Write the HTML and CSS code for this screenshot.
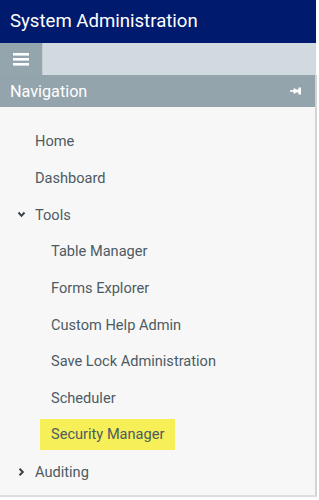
FILE: index.html
```html
<!DOCTYPE html>
<html>
<head>
  <title>System Administration</title>
  <link rel="stylesheet" href="styles.css">
</head>
<body>
  <div id="header">System Administration</div>
  <div class="toolbar">
    <button class="menu-button" aria-label="Menu">
      <svg width="16" height="13" viewBox="0 0 16 13">
        <rect x="0" y="0" width="16" height="2.6" fill="#fff"/>
        <rect x="0" y="5" width="16" height="2.6" fill="#fff"/>
        <rect x="0" y="10" width="16" height="2.6" fill="#fff"/>
      </svg>
    </button>
    <div class="toolbar-fill"></div>
  </div>
  <div class="nav">
    <div class="nav-title">
      <span>Navigation</span>
      <svg class="pin" width="11" height="8" viewBox="0 0 11 8">
        <rect x="0" y="3.2" width="4" height="1.6" fill="#fff"/>
        <rect x="3.5" y="1.5" width="2" height="5" fill="#fff"/>
        <rect x="5" y="2.5" width="4" height="3" fill="#fff"/>
        <rect x="8.5" y="0.5" width="2.5" height="7" fill="#fff"/>
      </svg>
    </div>
    <ul class="nav-list">
      <li class="item">Home</li>
      <li class="item">Dashboard</li>
      <li class="item group">
        <svg class="chev" width="19" height="8" viewBox="0 0 19 8">
          <path d="M2.5 1.5 L5.5 4.8 L8.5 1.5" fill="none" stroke="#36434a" stroke-width="2"/>
        </svg>Tools
      </li>
      <li class="item sub">Table Manager</li>
      <li class="item sub">Forms Explorer</li>
      <li class="item sub">Custom Help Admin</li>
      <li class="item sub">Save Lock Administration</li>
      <li class="item sub">Scheduler</li>
      <li class="item sub"><span class="highlight">Security Manager</span></li>
      <li class="item group">
        <svg class="chev" width="19" height="10" viewBox="0 0 19 10">
          <path d="M3.5 1.8 L6.8 5 L3.5 8.2" fill="none" stroke="#36434a" stroke-width="2"/>
        </svg>Auditing
      </li>
    </ul>
  </div>
</body>
</html>
```

FILE: styles.css
```css
body {
  margin: 0;
  width: 319px;
  font-family: Roboto, 'Liberation Sans', sans-serif;
  background-color: #ffffff;
}
#header {
  height: 43px;
  width: 316px;
  box-sizing: border-box;
  padding-left: 10px;
  background-color: #001a6e;
  color: #ffffff;
  font-size: 18.6px;
  line-height: 43px;
}
.toolbar {
  display: flex;
  width: 316px;
  height: 32px;
}
.menu-button {
  width: 42px;
  height: 32px;
  border: none;
  padding: 0;
  background-color: #94a5ad;
  display: flex;
  align-items: center;
  justify-content: center;
}
.toolbar-fill {
  flex: 1;
  background-color: #d1dadf;
  border-left: 1px solid #c2ccd1;
}
.nav {
  width: 315px;
  border-right: 2px solid #d4d4d4;
  border-bottom: 2px solid #dedede;
  background-color: #f7f7f7;
}
.nav-title {
  display: flex;
  align-items: center;
  justify-content: space-between;
  height: 32px;
  padding: 0 14px 0 10px;
  background-color: #93a4ac;
  color: #ffffff;
  font-size: 16.2px;
}
.nav-list {
  list-style: none;
  margin: 0;
  padding: 16px 0 5px 0;
}
.item {
  display: flex;
  align-items: center;
  height: 36.7px;
  padding-left: 35px;
  font-size: 14.6px;
  color: #4d5b63;
}
.item.sub {
  padding-left: 51px;
}
.item.group {
  padding-left: 16px;
}
.chev {
  flex: none;
}
.highlight {
  margin-left: -11px;
  padding: 0 11px;
  line-height: 31px;
  background-color: #f6ef57;
}
```
